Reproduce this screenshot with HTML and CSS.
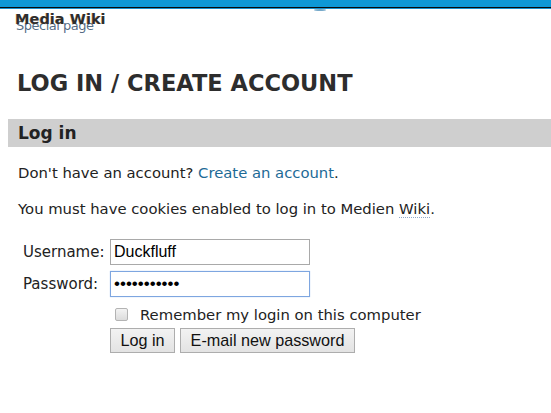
FILE: index.html
```html
<!DOCTYPE html>
<html>
<head>
<meta charset="utf-8">
<link rel="stylesheet" href="styles.css">
</head>
<body>
<div class="topbar"></div>
<div class="topline"><span class="smudge"></span></div>
<div class="header">
  <div class="site">Media Wiki</div>
  <div class="sub">Special page</div>
</div>
<h1 class="title">LOG IN / CREATE ACCOUNT</h1>
<h2 class="section">Log in</h2>
<div class="content">
  <p class="para">Don't have an account? <a class="link" href="#">Create an account</a>.</p>
  <p class="para">You must have cookies enabled to log in to Medien <span class="wiki">Wiki</span>.</p>
  <form class="form">
    <label class="lbl">Username:</label>
    <div class="field"><input class="input" type="text" value="Duckfluff"></div>
    <label class="lbl">Password:</label>
    <div class="field"><input class="input focus" type="password" value="duckfluff12"></div>
    <div></div>
    <div class="remember"><span class="check"></span><span>Remember my login on this computer</span></div>
    <div></div>
    <div class="buttons"><button class="btn" type="button">Log in</button><button class="btn" type="button">E-mail new password</button></div>
  </form>
</div>
</body>
</html>
```
FILE: styles.css
```css
html, body {
  margin: 0;
  padding: 0;
  background: #fff;
  font-family: "DejaVu Sans", Verdana, sans-serif;
  color: #222;
}
.topbar {
  height: 7px;
  background: #0e98d6;
  border-bottom: 1px solid #0b0b0b;
}
.topline {
  height: 1px;
  background: #1792cc;
  position: relative;
}
.smudge {
  position: absolute;
  left: 314px;
  top: 1px;
  width: 12px;
  height: 2px;
  border-radius: 50%;
  background: #3d86b3;
  opacity: 0.7;
}
.header {
  position: relative;
  height: 30px;
  padding-left: 15px;
}
.site {
  position: relative;
  z-index: 2;
  font-weight: bold;
  font-size: 14.6px;
  line-height: 17px;
  padding-top: 1px;
  color: #2e2e2e;
  text-shadow: -0.6px 0 0 rgba(200,120,30,0.45);
}
.sub {
  position: absolute;
  left: 16px;
  top: 8px;
  font-size: 13px;
  letter-spacing: -0.5px;
  line-height: 17px;
  color: rgba(50,80,110,0.85);
  z-index: 1;
}
.title {
  margin: 31px 0 0 17px;
  font-size: 22.5px;
  line-height: 27px;
  font-weight: bold;
  color: #2d2d2d;
}
.section {
  margin: 22px 0 0 8px;
  background: #cfcfcf;
  height: 28px;
  line-height: 28px;
  padding-left: 10px;
  font-size: 17px;
  font-weight: bold;
  color: #222;
}
.content {
  padding-left: 18px;
}
.para {
  margin: 16px 0 0 0;
  font-size: 14.8px;
  line-height: 20px;
}
.para + .para {
  margin-top: 16px;
}
.link {
  color: #1d6a96;
  text-decoration: none;
}
.wiki {
  color: #222;
  border-bottom: 1px dotted #8fa9c9;
}
.form {
  display: grid;
  grid-template-columns: 87px auto;
  row-gap: 6px;
  margin: 20px 0 0 5px;
  align-items: center;
}
.lbl {
  font-size: 15px;
  color: #222;
}
.field {
  display: flex;
}
.input {
  box-sizing: border-box;
  width: 200px;
  height: 26px;
  margin: 0;
  padding: 1px 3px;
  border: 1px solid #a9a9a9;
  font-family: "Liberation Sans", Arial, sans-serif;
  font-size: 16px;
  color: #000;
  outline: none;
}
.input.focus {
  border: 1px solid #7ea6e0;
  box-shadow: 0 0 1px #a9c6ef;
  font-size: 17px;
}
.remember {
  display: flex;
  align-items: center;
  gap: 12px;
  padding-left: 5px;
  margin-top: 3px;
  font-size: 14.8px;
  color: #222;
}
.check {
  box-sizing: border-box;
  width: 13px;
  height: 13px;
  border: 1px solid #b3b3b3;
  border-radius: 2px;
  background: linear-gradient(#f3f3f3, #dcdcdc);
}
.buttons {
  display: flex;
  gap: 5px;
  margin-top: -1px;
}
.btn {
  box-sizing: border-box;
  height: 25px;
  margin: 0;
  padding: 0 9.5px;
  border: 1px solid #adadad;
  border-radius: 0;
  background: linear-gradient(#f2f2f2, #e3e3e3);
  font-family: "Liberation Sans", Arial, sans-serif;
  font-size: 16.2px;
  color: #111;
}
```
